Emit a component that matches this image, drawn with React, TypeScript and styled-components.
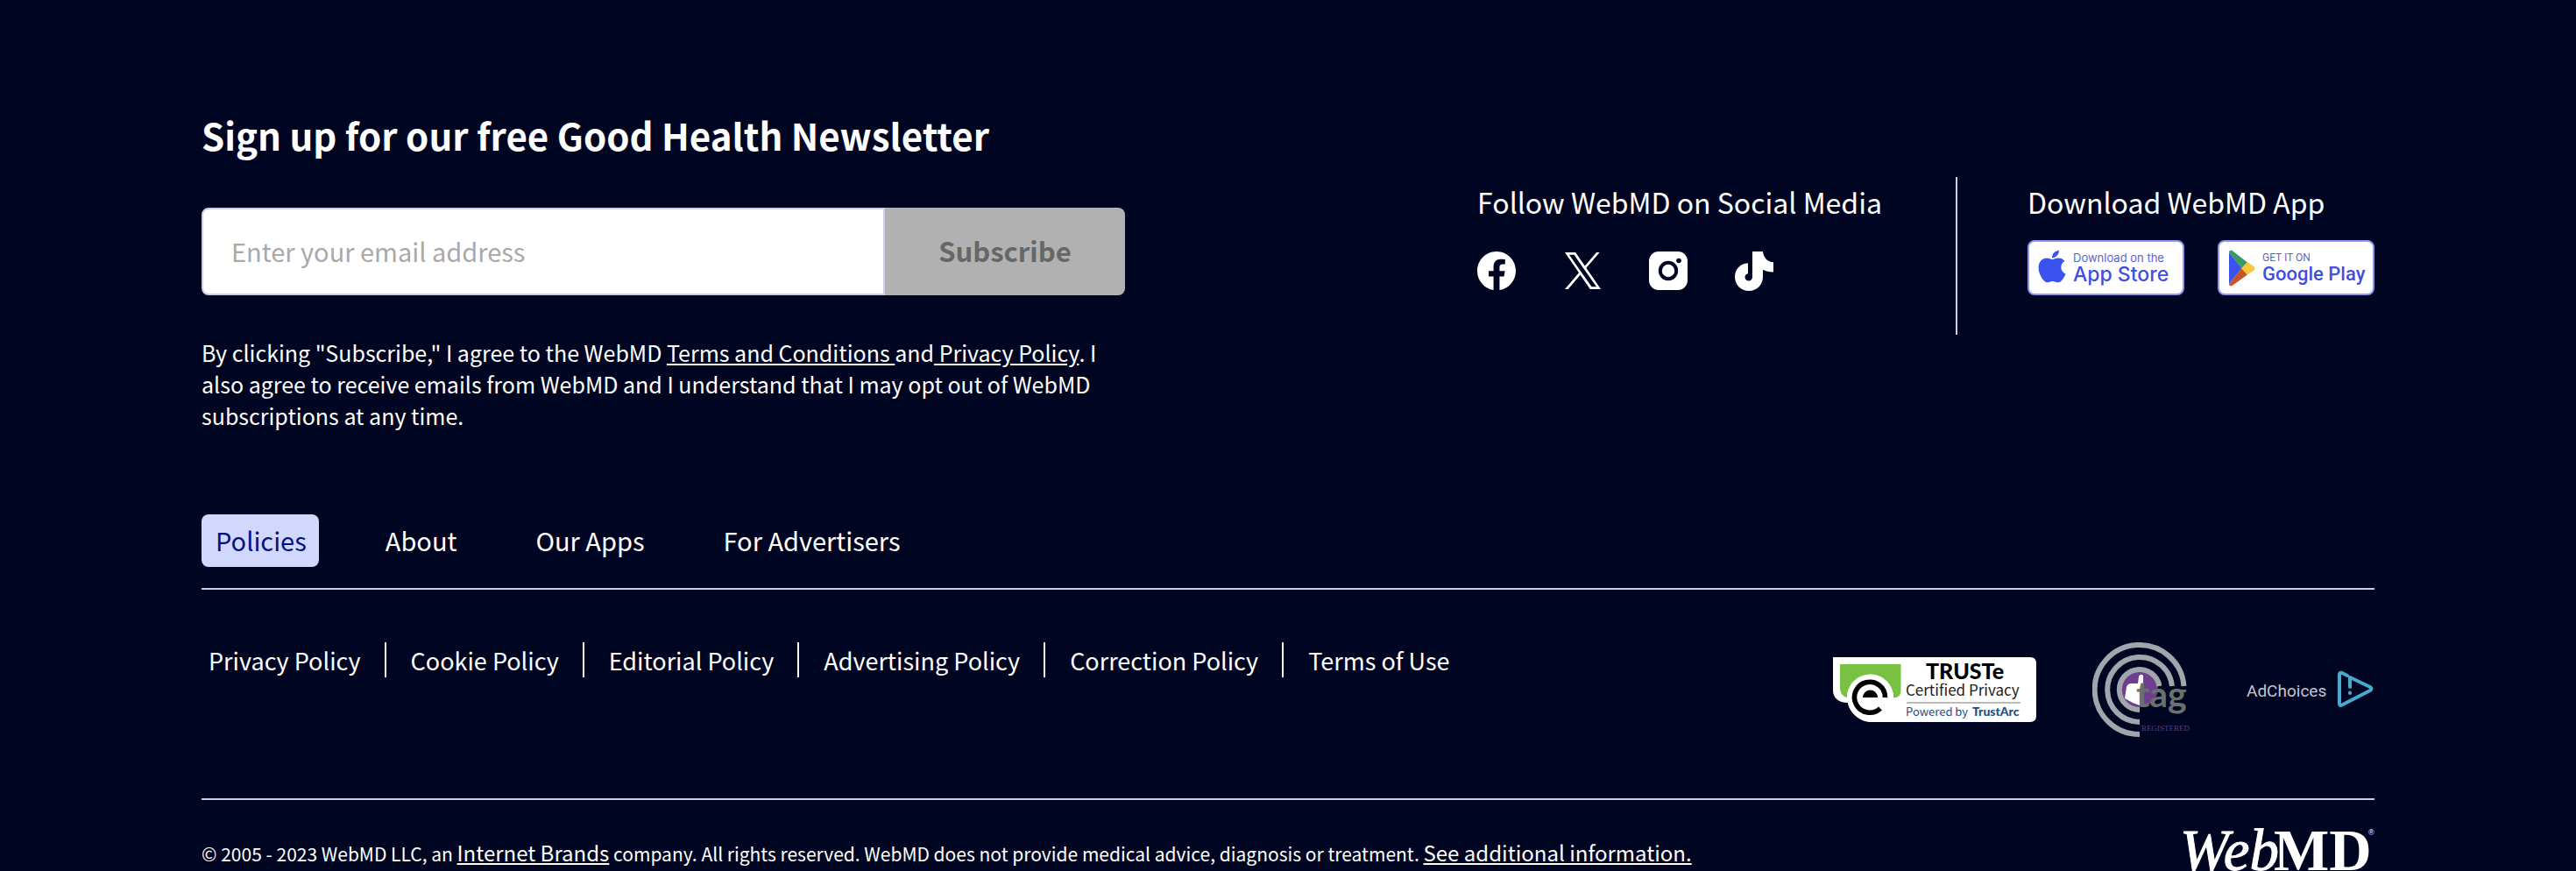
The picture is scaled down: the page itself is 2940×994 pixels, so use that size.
import React from 'react';
import styled, { createGlobalStyle, css } from 'styled-components';
import { FaApple } from 'react-icons/fa';
import { BsFacebook } from 'react-icons/bs';

const sans = '"Noto Sans CJK SC", "Noto Sans", sans-serif';
const navy = '#000521';
const rule = '#cfcde9';

const GlobalStyle = createGlobalStyle`
  *, *::before, *::after { box-sizing: border-box; }
  html, body { margin: 0; padding: 0; background: ${navy}; }
  body { font-family: ${sans}; color: #fff; }
  h2, h3, p, ul { margin: 0; padding: 0; }
  a { color: inherit; }
`;

const Footer = styled.footer`
  min-height: 100vh;
  padding: 124px 230px 0;
  background: ${navy};
`;

const TopRow = styled.div`
  display: flex;
  justify-content: space-between;
  align-items: flex-start;
`;

const Newsletter = styled.form`
  width: 1054px;
`;

const Title = styled.h2`
  font-size: 42px;
  line-height: 60px;
  font-weight: 700;
`;

const Field = styled.div`
  display: flex;
  height: 100px;
  margin-top: 53px;
`;

const EmailInput = styled.input`
  flex: 1;
  min-width: 0;
  padding: 0 32px 2px;
  border: 2px solid ${rule};
  border-radius: 8px 0 0 8px;
  background: #fff;
  color: #222;
  font: 400 29px ${sans};
  &::placeholder { color: #a9a9a9; opacity: 1; }
`;

const SubscribeButton = styled.button`
  width: 274px;
  padding: 0 0 4px;
  border: 0;
  border-radius: 0 8px 8px 0;
  background: #b1b1b1;
  color: #676767;
  font: 700 31px ${sans};
`;

const Consent = styled.p`
  margin-top: 47px;
  font-size: 25px;
  line-height: 36px;
`;

const Connect = styled.div`
  display: flex;
  margin-top: 78px;
`;

const ConnectGroup = styled.section`
  height: 180px;
  padding-top: 6px;
  & + & {
    margin-left: 84px;
    padding-left: 80px;
    border-left: 2px solid ${rule};
  }
`;

const ConnectTitle = styled.h3`
  font-size: 32px;
  line-height: 44px;
  font-weight: 400;
`;

const SocialList = styled.div`
  display: flex;
  gap: 54px;
  margin-top: 34px;
`;

const SocialLink = styled.a`
  display: flex;
  align-items: center;
  justify-content: center;
  width: 44px;
  height: 46px;
  color: #fff;
`;

const StoreList = styled.div`
  display: flex;
  gap: 38px;
  margin-top: 22px;
`;

const StoreBadge = styled.a`
  display: flex;
  align-items: center;
  gap: 8px;
  width: 179px;
  height: 63px;
  padding-left: 10px;
  border: 2px solid #8d97ee;
  border-radius: 8px;
  background: #fff;
  color: #3f50e0;
  text-decoration: none;
  white-space: nowrap;
`;

const StoreText = styled.span<{ $google?: boolean }>`
  display: flex;
  flex-direction: column;
  font-family: ${(p) => (p.$google ? 'Roboto' : 'Inter')}, sans-serif;
  font-size: ${(p) => (p.$google ? 22 : 23)}px;
  line-height: 24px;
  font-weight: 500;
`;

const StoreSmall = styled.span<{ $google?: boolean }>`
  font-size: ${(p) => (p.$google ? 12 : 13)}px;
  line-height: 14px;
  font-weight: 400;
  color: #5a66cf;
`;

const Tabs = styled.nav`
  display: flex;
  gap: 60px;
  margin-top: 95px;
  padding-bottom: 24px;
  border-bottom: 2px solid ${rule};
`;

const Tab = styled.button<{ $active?: boolean }>`
  height: 60px;
  padding: 0 14px 2px 16px;
  border: 0;
  border-radius: 8px;
  background: transparent;
  color: #fff;
  font: 400 29px/58px ${sans};
  ${(p) => p.$active && css`
    background: #d2d8fd;
    color: #06127e;
  `}
`;

const PolicyRow = styled.div`
  display: flex;
  justify-content: space-between;
  height: 240px;
  padding-top: 60px;
  border-bottom: 2px solid ${rule};
`;

const LinkList = styled.ul`
  display: flex;
  list-style: none;
  padding-left: 8px;
`;

const LinkItem = styled.li`
  height: 40px;
  font-size: 27px;
  line-height: 42px;
  & + & {
    margin-left: 27px;
    padding-left: 28px;
    border-left: 2px solid #fff;
  }
  a { text-decoration: none; }
`;

const Seals = styled.div`
  display: flex;
  align-items: flex-start;
  gap: 64px;
`;

const Seal = styled.a<{ $top: number }>`
  display: flex;
  margin-top: ${(p) => p.$top}px;
`;

const Legal = styled.div`
  display: flex;
  justify-content: space-between;
  align-items: flex-start;
  padding-top: 32px;
`;

const Copyright = styled.p`
  margin-top: 10px;
  font-size: 21px;
  line-height: 36px;
  a { font-size: 24px; }
`;

const XIcon = () => (
  <svg width="41" height="42" viewBox="0 0 1200 1227" fill="currentColor" aria-hidden="true">
    <path d="M714.163 519.284L1160.89 0H1055.03L667.137 450.887L357.328 0H0L468.492 681.821L0 1226.37H105.866L515.491 750.218L842.672 1226.37H1200L714.137 519.284H714.163ZM569.165 687.828L521.697 619.934L144.011 79.6944H306.615L611.412 515.685L658.88 583.579L1055.08 1150.3H892.476L569.165 687.854V687.828Z" />
  </svg>
);

const InstagramIcon = () => (
  <svg width="44" height="44" viewBox="0 0 44 44" aria-hidden="true">
    <rect width="44" height="44" rx="11" fill="#fff" />
    <circle cx="22" cy="22" r="9.2" fill="none" stroke={navy} strokeWidth="4" />
    <circle cx="34" cy="10.5" r="2.8" fill={navy} />
  </svg>
);

const TikTokIcon = () => (
  <svg width="44" height="45" viewBox="0 0 44 45" fill="#fff" aria-hidden="true">
    <path d="M20 0H32C32.3 6.5 37 11.8 44 12.3V23.5C39.5 23.6 35.5 22.8 32 20.8V29C32 38 25 45 16 45C7 45 0 38 0 29C0 20 6.5 13.5 15 13.2V25.2C13 25.6 11.5 27 11.5 29.2C11.5 31.7 13.4 33.5 15.8 33.5C18.3 33.5 20 31.6 20 29Z" />
  </svg>
);

const PlayIcon = () => (
  <svg width="31" height="42" viewBox="0 0 31 42" aria-hidden="true">
    <path d="M1 3L1 39L15.5 21Z" fill="#3b53ee" />
    <path d="M1 3C1 .8 3 .3 5 1.3L22 14.5L15.5 21.5Z" fill="#3a9a62" />
    <path d="M1 39C1 41.4 3 41.9 5 40.8L22 28.5L15.5 20.5Z" fill="#c4552f" />
    <path d="M22 14L29.5 19Q31.5 21.2 29.5 23.5L22 28.7L15 21.3Z" fill="#f7c844" />
  </svg>
);

const TrusteSeal = () => (
  <svg width="232" height="74" viewBox="0 0 232 74" role="img" aria-label="TRUSTe Certified Privacy">
    <path d="M0 0H225Q232 0 232 7V67Q232 74 225 74H43C31 74 19.5 64 17 52C6 52 0 46 0 38Z" fill="#fff" />
    <path d="M8 8H77.5V38Q77.5 46 69 46.5A26.5 26.5 0 0 0 16 46Q8 44 8 35Z" fill="#79c143" />
    <circle cx="42.5" cy="46" r="26.5" fill="#fff" />
    <path d="M59.5 46A17.5 17.5 0 1 0 54 58.5" fill="none" stroke="#000" strokeWidth="5.6" />
    <path d="M34 46A8.5 8.5 0 0 1 51 46Z" fill="#000" />
    <text x="106" y="25" fontFamily="Lato, sans-serif" fontSize="25" fontWeight="900">TRUSTe</text>
    <text x="83" y="44" fontFamily={sans} fontSize="17" fill="#222">Certified Privacy</text>
    <path d="M84 52H214" stroke="#777" strokeWidth="1" />
    <text x="83" y="67" fontFamily={sans} fontSize="13" fill="#1f4e82">Powered by</text>
    <text x="159" y="67" fontFamily="Lato, sans-serif" fontSize="14" fontWeight="900" fill="#1f4e82">TrustArc</text>
  </svg>
);

const TagSeal = () => (
  <svg width="112" height="108" viewBox="0 0 112 108" role="img" aria-label="tag registered">
    <circle cx="54" cy="53" r="21" fill="#6f3f8f" />
    <path d="M39 51Q40 47 45 47L52 47L53 39Q55 35 58 38V50L54 72L46 69L37 64Z" fill="#fff" />
    <g fill="none" stroke="#9fa6ac" strokeWidth="6">
      <path d="M104.5 50A51 51 0 1 0 54 105" />
      <path d="M91 50A37 37 0 1 0 54 91" />
      <path d="M76.5 50A23 23 0 1 0 54 77" />
    </g>
    <text x="50" y="74" fontFamily="Lato, sans-serif" fontSize="41" fontWeight="700" fill="#69716f">tag</text>
    <text x="56" y="101" fontFamily="Liberation Serif, serif" fontSize="9" fill="#5d3a86">REGISTERED</text>
  </svg>
);

const AdChoicesSeal = () => (
  <svg width="146" height="44" viewBox="0 0 146 44" role="img" aria-label="AdChoices">
    <text x="0" y="30" fontFamily="Roboto, sans-serif" fontSize="19" fill="#c4c5d0">AdChoices</text>
    <g fill="none" stroke="#48a9cd" strokeWidth="4" strokeLinecap="round" strokeLinejoin="round">
      <path d="M115 6L109 3Q106 2 106 5V38Q106 41 109 39.5L141 23Q144 21 141 19L118 8V19" />
      <path d="M118 25.5V26" />
    </g>
  </svg>
);

const WebMDLogo = () => (
  <svg width="222" height="49" viewBox="0 0 222 49" fill="#fff" role="img" aria-label="WebMD">
    <text x="0" y="48" fontFamily="Liberation Serif, serif" fontSize="67" fontStyle="italic" stroke="#fff" strokeWidth="1">Web</text>
    <text x="107" y="48" fontFamily="Liberation Serif, serif" fontSize="67" fontWeight="700">MD</text>
    <text x="215" y="8" fontFamily="Liberation Sans, sans-serif" fontSize="9">®</text>
  </svg>
);

const tabs = ['Policies', 'About', 'Our Apps', 'For Advertisers'];
const policies = ['Privacy Policy', 'Cookie Policy', 'Editorial Policy', 'Advertising Policy', 'Correction Policy', 'Terms of Use'];

export default function App() {
  return (
    <>
      <GlobalStyle />
      <Footer>
        <TopRow>
          <Newsletter onSubmit={(e) => e.preventDefault()}>
            <Title>Sign up for our free Good Health Newsletter</Title>
            <Field>
              <EmailInput type="email" aria-label="Email address" placeholder="Enter your email address" />
              <SubscribeButton type="submit" disabled>Subscribe</SubscribeButton>
            </Field>
            <Consent>
              By clicking "Subscribe," I agree to the WebMD <a href="#terms">Terms and Conditions </a>and
              <a href="#privacy"> Privacy Policy</a>. I also agree to receive emails from WebMD and I understand
              that I may opt out of WebMD subscriptions at any time.
            </Consent>
          </Newsletter>
          <Connect>
            <ConnectGroup>
              <ConnectTitle>Follow WebMD on Social Media</ConnectTitle>
              <SocialList>
                <SocialLink href="#facebook" aria-label="Facebook"><BsFacebook size={44} /></SocialLink>
                <SocialLink href="#x" aria-label="X"><XIcon /></SocialLink>
                <SocialLink href="#instagram" aria-label="Instagram"><InstagramIcon /></SocialLink>
                <SocialLink href="#tiktok" aria-label="TikTok"><TikTokIcon /></SocialLink>
              </SocialList>
            </ConnectGroup>
            <ConnectGroup>
              <ConnectTitle>Download WebMD App</ConnectTitle>
              <StoreList>
                <StoreBadge href="#app-store">
                  <svg width="32" height="42" viewBox="0 0 32 42" aria-hidden="true">
                    <FaApple x={-5} y={-2} size={42} color="#3b53ee" />
                  </svg>
                  <StoreText>
                    <StoreSmall>Download on the</StoreSmall>
                    App Store
                  </StoreText>
                </StoreBadge>
                <StoreBadge href="#google-play">
                  <PlayIcon />
                  <StoreText $google>
                    <StoreSmall $google>GET IT ON</StoreSmall>
                    Google Play
                  </StoreText>
                </StoreBadge>
              </StoreList>
            </ConnectGroup>
          </Connect>
        </TopRow>

        <Tabs aria-label="Footer sections">
          {tabs.map((t, i) => (
            <Tab key={t} type="button" $active={i === 0}>{t}</Tab>
          ))}
        </Tabs>

        <PolicyRow>
          <LinkList>
            {policies.map((p) => (
              <LinkItem key={p}><a href="#policy">{p}</a></LinkItem>
            ))}
          </LinkList>
          <Seals>
            <Seal $top={17} href="#truste"><TrusteSeal /></Seal>
            <Seal $top={0} href="#tag"><TagSeal /></Seal>
            <Seal $top={32} href="#adchoices"><AdChoicesSeal /></Seal>
          </Seals>
        </PolicyRow>

        <Legal>
          <Copyright>
            © 2005 - 2023 WebMD LLC, an <a href="#brands">Internet Brands</a> company. All rights reserved. WebMD
            does not provide medical advice, diagnosis or treatment. <a href="#info">See additional information.</a>
          </Copyright>
          <WebMDLogo />
        </Legal>
      </Footer>
    </>
  );
}
